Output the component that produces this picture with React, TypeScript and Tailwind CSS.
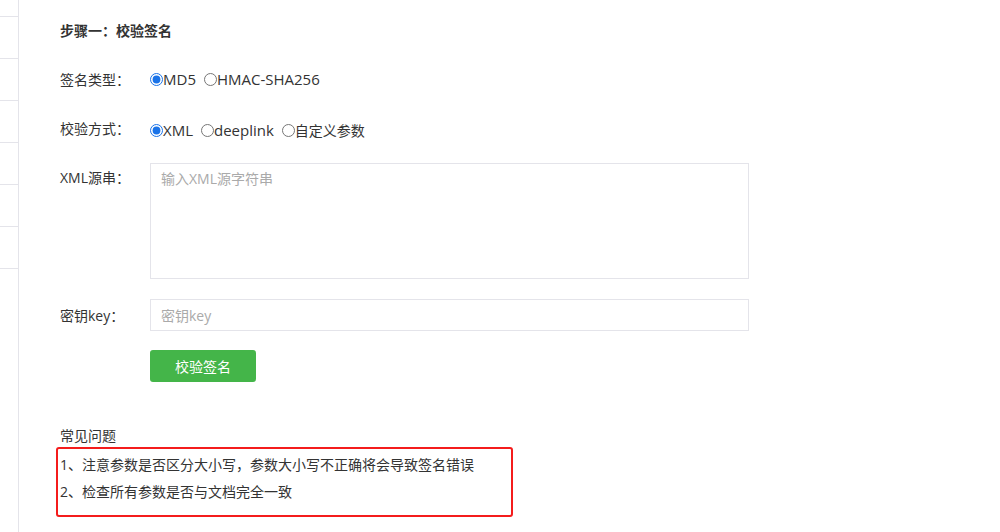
const sideRows = [0, 1, 2, 3, 4, 5, 6];

function Radio({ name, label, checked, latin }: { name: string; label: string; checked?: boolean; latin?: boolean }) {
  return (
    <label className="flex items-center mr-[8px]">
      <input type="radio" name={name} defaultChecked={checked} className="m-0 w-[13px] h-[13px] accent-[#1a73e8]" />
      <span className={latin ? "text-[15px]" : ""}>{label}</span>
    </label>
  );
}

export default function App() {
  return (
    <div
      className="flex w-[1000px] h-[532px] bg-white text-[14px] text-[#333] overflow-hidden"
      style={{ fontFamily: '"Open Sans", "Noto Sans CJK SC", sans-serif' }}
    >
      {/* left nav stub */}
      <div className="w-[19px] shrink-0 border-r border-[#e4e4ea] pt-[16px]">
        {sideRows.map((i) => (
          <div key={i} className="h-[42px] border-t border-[#e4e4ea]" />
        ))}
      </div>

      <div className="flex flex-col pl-[41px]">
        <div className="mt-[21px] leading-[20px] font-bold">步骤一：校验签名</div>

        <div className="mt-[28px] flex h-[20px] items-center">
          <div className="w-[90px]">签名类型：</div>
          <div className="flex items-center">
            <Radio name="sign" label="MD5" checked latin />
            <Radio name="sign" label="HMAC-SHA256" latin />
          </div>
        </div>

        <div className="mt-[31px] flex h-[20px] items-center">
          <div className="w-[90px] -mt-[4px]">校验方式：</div>
          <div className="flex items-center">
            <Radio name="mode" label="XML" checked latin />
            <Radio name="mode" label="deeplink" latin />
            <Radio name="mode" label="自定义参数" />
          </div>
        </div>

        <div className="mt-[23px] flex">
          <div className="w-[90px] pt-[5px] leading-[20px]">XML源串：</div>
          <textarea
            placeholder="输入XML源字符串"
            className="w-[599px] h-[116px] border border-[#e4e4ea] px-[10px] py-[5px] leading-[20px] resize-none outline-none placeholder:text-[#aaa]"
          />
        </div>

        <div className="mt-[20px] flex items-center">
          <div className="w-[90px]">密钥key：</div>
          <input
            placeholder="密钥key"
            className="w-[599px] h-[32px] border border-[#e4e4ea] px-[10px] outline-none placeholder:text-[#aaa]"
          />
        </div>

        <div className="mt-[19px] pl-[90px]">
          <button className="w-[106px] h-[32px] rounded-[3px] bg-[#44b549] text-white">校验签名</button>
        </div>

        <div className="mt-[44px] leading-[20px]">常见问题</div>
        <div className="-ml-[4px] mt-px w-[457px] h-[70px] border-2 border-[#f41c1c] rounded-[3px] pl-[2px] pt-[2px] leading-[27px]">
          <div>1、注意参数是否区分大小写，参数大小写不正确将会导致签名错误</div>
          <div>2、检查所有参数是否与文档完全一致</div>
        </div>
      </div>
    </div>
  );
}
